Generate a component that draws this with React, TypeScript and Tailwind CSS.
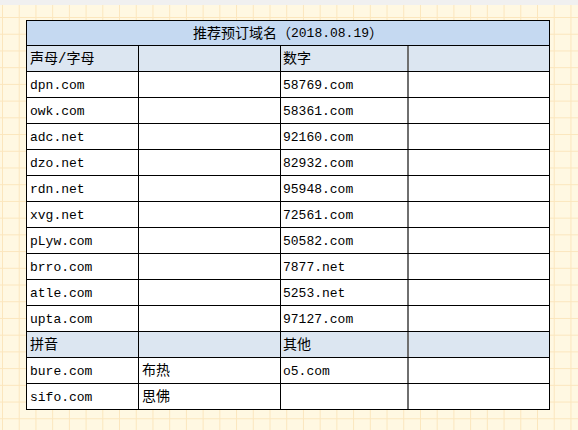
import React from "react";

const rows: [string, string, string, string][] = [
  ["dpn.com", "", "58769.com", ""],
  ["owk.com", "", "58361.com", ""],
  ["adc.net", "", "92160.com", ""],
  ["dzo.net", "", "82932.com", ""],
  ["rdn.net", "", "95948.com", ""],
  ["xvg.net", "", "72561.com", ""],
  ["pLyw.com", "", "50582.com", ""],
  ["brro.com", "", "7877.net", ""],
  ["atle.com", "", "5253.net", ""],
  ["upta.com", "", "97127.com", ""],
];

const font = "font-['Liberation_Mono','Noto_Sans_CJK_SC',monospace]";

function Txt({ s }: { s: string }) {
  const cjk = /[\u3000-\u9fff\uff00-\uffef]/.test(s);
  return <span className={cjk ? "text-[14px]" : ""}>{s}</span>;
}

function Row({
  cells,
  header,
}: {
  cells: [string, string, string, string];
  header?: boolean;
}) {
  const bg = header ? "bg-[#dce6f1]" : "bg-white";
  return (
    <div
      className={`grid grid-cols-[112px_142px_128px_141px] h-[26px] border-b border-black ${bg}`}
    >
      <div className="border-r border-black flex items-center pl-[3px] pt-[2px] overflow-hidden whitespace-nowrap">
        <Txt s={cells[0]} />
      </div>
      <div className="border-r border-black flex items-center pl-[3px] pt-[2px] overflow-hidden whitespace-nowrap">
        <Txt s={cells[1]} />
      </div>
      <div className="border-r-2 border-[#6f6f6f] flex items-center pl-[2px] pt-[2px] overflow-hidden whitespace-nowrap">
        <Txt s={cells[2]} />
      </div>
      <div className="border-r border-black flex items-center pl-[3px] pt-[2px] overflow-hidden whitespace-nowrap">
        <Txt s={cells[3]} />
      </div>
    </div>
  );
}

export default function App() {
  return (
    <div
      className={`w-[578px] h-[430px] overflow-hidden bg-[#fff8e2] [background-image:linear-gradient(to_right,#fbe6bd_1px,transparent_1px),linear-gradient(to_bottom,#fbe6bd_1px,transparent_1px)] [background-size:16.72px_16.72px] [background-position:2px_0.3px] text-[13px] text-black ${font}`}
    >
      <div className="h-[5px] bg-[#f0f0f0]" />
      <div className="pt-[15px] pl-[26px]">
        <div className="w-[524px] border-l border-t border-black">
          <div className="h-[25px] bg-[#c5d9f1] border-b border-r border-black flex items-center justify-center pt-[2px] whitespace-nowrap">
            <span className="text-[14px]">推荐预订域名（</span>
            <span>2018.08.19</span>
            <span className="text-[14px]">）</span>
          </div>
          <Row cells={["声母/字母", "", "数字", ""]} header />
          {rows.map((r, i) => (
            <Row key={i} cells={r} />
          ))}
          <Row cells={["拼音", "", "其他", ""]} header />
          <Row cells={["bure.com", "布热", "o5.com", ""]} />
          <Row cells={["sifo.com", "思佛", "", ""]} />
        </div>
      </div>
    </div>
  );
}
